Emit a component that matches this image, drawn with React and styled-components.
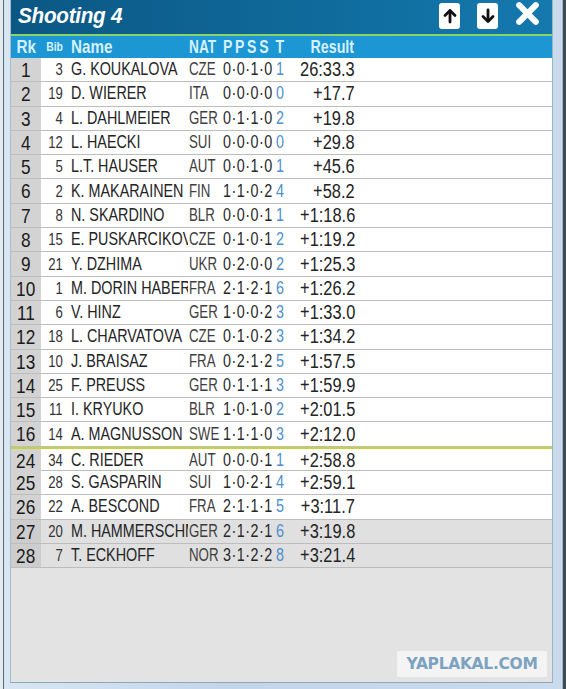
import styled, { createGlobalStyle } from "styled-components";

const GlobalStyle = createGlobalStyle`
  html, body {
    margin: 0;
    padding: 0;
    background: #c8dbec;
  }
  * { box-sizing: border-box; }
`;

// no narrow face installed: Liberation Sans squeezed to Arial Narrow proportions
const SANS = `"Liberation Sans", Arial, sans-serif`;

const results = [
  { rk: 1, bib: 3, name: "G. KOUKALOVA", nat: "CZE", shots: "0·0·1·0", t: 1, res: "26:33.3" },
  { rk: 2, bib: 19, name: "D. WIERER", nat: "ITA", shots: "0·0·0·0", t: 0, res: "+17.7" },
  { rk: 3, bib: 4, name: "L. DAHLMEIER", nat: "GER", shots: "0·1·1·0", t: 2, res: "+19.8" },
  { rk: 4, bib: 12, name: "L. HAECKI", nat: "SUI", shots: "0·0·0·0", t: 0, res: "+29.8" },
  { rk: 5, bib: 5, name: "L.T. HAUSER", nat: "AUT", shots: "0·0·1·0", t: 1, res: "+45.6" },
  { rk: 6, bib: 2, name: "K. MAKARAINEN", nat: "FIN", shots: "1·1·0·2", t: 4, res: "+58.2" },
  { rk: 7, bib: 8, name: "N. SKARDINO", nat: "BLR", shots: "0·0·0·1", t: 1, res: "+1:18.6" },
  { rk: 8, bib: 15, name: "E. PUSKARCIKOVA", nat: "CZE", shots: "0·1·0·1", t: 2, res: "+1:19.2" },
  { rk: 9, bib: 21, name: "Y. DZHIMA", nat: "UKR", shots: "0·2·0·0", t: 2, res: "+1:25.3" },
  { rk: 10, bib: 1, name: "M. DORIN HABERT", nat: "FRA", shots: "2·1·2·1", t: 6, res: "+1:26.2" },
  { rk: 11, bib: 6, name: "V. HINZ", nat: "GER", shots: "1·0·0·2", t: 3, res: "+1:33.0" },
  { rk: 12, bib: 18, name: "L. CHARVATOVA", nat: "CZE", shots: "0·1·0·2", t: 3, res: "+1:34.2" },
  { rk: 13, bib: 10, name: "J. BRAISAZ", nat: "FRA", shots: "0·2·1·2", t: 5, res: "+1:57.5" },
  { rk: 14, bib: 25, name: "F. PREUSS", nat: "GER", shots: "0·1·1·1", t: 3, res: "+1:59.9" },
  { rk: 15, bib: 11, name: "I. KRYUKO", nat: "BLR", shots: "1·0·1·0", t: 2, res: "+2:01.5" },
  { rk: 16, bib: 14, name: "A. MAGNUSSON", nat: "SWE", shots: "1·1·1·0", t: 3, res: "+2:12.0" },
  { rk: 24, bib: 34, name: "C. RIEDER", nat: "AUT", shots: "0·0·0·1", t: 1, res: "+2:58.8", split: true },
  { rk: 25, bib: 28, name: "S. GASPARIN", nat: "SUI", shots: "1·0·2·1", t: 4, res: "+2:59.1" },
  { rk: 26, bib: 22, name: "A. BESCOND", nat: "FRA", shots: "2·1·1·1", t: 5, res: "+3:11.7" },
  { rk: 27, bib: 20, name: "M. HAMMERSCHMIDT", nat: "GER", shots: "2·1·2·1", t: 6, res: "+3:19.8", dim: true },
  { rk: 28, bib: 7, name: "T. ECKHOFF", nat: "NOR", shots: "3·1·2·2", t: 8, res: "+3:21.4", dim: true },
];

const Frame = styled.div`
  width: 566px;
  height: 689px;
  padding: 0 13px 6px 10px;
  background: linear-gradient(to right, #d9e6f2, #c2d6ea 40%, #c9dbec);
  box-shadow: inset 3px 0 0 #e4ebf1, inset 4px 0 0 #56697a, inset -3px 0 0 #3f4a54,
    inset -4px 0 0 #9fb6cc;
  display: flex;
`;

const Panel = styled.div`
  flex: 1;
  display: flex;
  flex-direction: column;
  background: #e3e3e3;
  border-right: 1px solid #9db3c8;
  border-bottom: 1px solid #8fa5ba;
  border-left: 1px solid #a8bccf;
`;

const TitleBar = styled.div`
  height: 36px;
  display: flex;
  align-items: center;
  padding: 0 12px 2px 7px;
  background: linear-gradient(to right, #0b5783, #0f6a9b 55%, #1579ae);
  border-bottom: 2px solid #8ad36a;
`;

const Title = styled.h1`
  margin: 0;
  flex: 1;
  font-family: ${SANS};
  font-style: italic;
  font-weight: 900;
  font-size: 22.5px;
  color: #ffffff;
  letter-spacing: -0.3px;
`;

const Controls = styled.div`
  display: flex;
  align-items: center;
  gap: 17px;
`;

const NavButton = styled.button`
  width: 21px;
  height: 26px;
  padding: 0;
  border: none;
  border-radius: 3px;
  background: #ffffff;
  display: flex;
  align-items: center;
  justify-content: center;
`;

const CloseButton = styled.button`
  width: 25px;
  height: 25px;
  padding: 0;
  margin-top: -5px;
  border: none;
  background: none;
  display: flex;
  align-items: center;
  justify-content: center;
`;

const cols = "30px 23px 124px 35px 51px 11px 71px 1fr";

const Squeeze = styled.span`
  display: inline-block;
  transform: scaleX(${(p) => p.$k || 0.82});
  transform-origin: ${(p) => p.$origin || "left"} center;
`;

const HeaderRow = styled.div`
  height: 22px;
  display: grid;
  grid-template-columns: ${cols};
  align-items: end;
  background: #1c97d4;
  color: #d6f0ff;
  font-family: ${SANS};
  font-weight: 700;
  font-size: 19px;
  line-height: 22px;
  white-space: nowrap;
`;

const HeadCell = styled.div`
  text-align: ${(p) => p.$align || "left"};
  font-size: ${(p) => p.$size || "19px"};
  padding-left: ${(p) => p.$pl || "0"};
  padding-right: ${(p) => p.$pr || "0"};
  letter-spacing: ${(p) => p.$ls || "normal"};
`;

const Row = styled.div`
  height: 24.3px;
  display: grid;
  grid-template-columns: ${cols};
  align-items: center;
  background: ${(p) => (p.$dim ? "#e0e0e0" : "#ffffff")};
  border-bottom: 1px solid #bdbdbd;
  border-top: ${(p) => (p.$split ? "2px solid #c8d33c" : "none")};
  font-family: ${SANS};
  font-size: 17.5px;
  line-height: 23px;
  color: #262626;
  white-space: nowrap;
`;

const RankCell = styled.div`
  height: 100%;
  background: ${(p) => (p.$dim ? "#cdcdcd" : "#d3d3d3")};
  text-align: center;
  font-size: 21px;
  line-height: 23px;
  color: #1a1a1a;
`;

const BibCell = styled.div`
  text-align: right;
  font-size: 16px;
  padding-right: 1px;
  color: #333;
`;

const NameCell = styled.div`
  overflow: hidden;
  padding-left: 7px;
  color: #242424;
`;

const NatCell = styled.div`
  padding-left: 1px;
  color: #3e3e3e;
`;

const ShotCell = styled.div`
  color: #282828;
  letter-spacing: 0.6px;
`;

const MissCell = styled.div`
  text-align: center;
  color: #4e8fd0;
`;

const ResultCell = styled.div`
  text-align: right;
  font-size: 20px;
  padding-right: 1px;
  color: #242424;
`;

const Filler = styled.div`
  flex: 1;
  display: flex;
  align-items: flex-end;
  justify-content: flex-end;
  padding: 0 5px 5px 0;
`;

const Watermark = styled.div`
  width: 150px;
  height: 26px;
  background: #f4f4f4;
  color: #7da2bf;
  font-family: "DejaVu Sans", Verdana, sans-serif;
  font-weight: 700;
  font-size: 15.5px;
  line-height: 26px;
  text-align: center;
  letter-spacing: -0.3px;
`;

const ArrowIcon = ({ down }) => (
  <svg width="14" height="16" viewBox="0 0 14 16">
    <g
      transform={down ? "rotate(180 7 8)" : undefined}
      fill="none"
      stroke="#111"
      strokeWidth="2.8"
      strokeLinecap="round"
      strokeLinejoin="round"
    >
      <path d="M7 14V3" />
      <path d="M2 7.5L7 2.5L12 7.5" />
    </g>
  </svg>
);

const CloseIcon = () => (
  <svg width="25" height="25" viewBox="0 0 24 24">
    <g stroke="#fff" strokeWidth="5.8" strokeLinecap="round">
      <path d="M4 4L20 20" />
      <path d="M20 4L4 20" />
    </g>
  </svg>
);

export default function App() {
  return (
    <>
      <GlobalStyle />
      <Frame>
        <Panel>
          <TitleBar>
            <Title>
              <Squeeze $k={0.92}>Shooting 4</Squeeze>
            </Title>
            <Controls>
              <NavButton>
                <ArrowIcon />
              </NavButton>
              <NavButton>
                <ArrowIcon down />
              </NavButton>
              <CloseButton>
                <CloseIcon />
              </CloseButton>
            </Controls>
          </TitleBar>
          <HeaderRow>
            <HeadCell $align="center">
              <Squeeze $origin="center" $k={0.8}>Rk</Squeeze>
            </HeadCell>
            <HeadCell $align="right" $size="13px" $pr="1px">
              <Squeeze $origin="right" $k={0.8}>Bib</Squeeze>
            </HeadCell>
            <HeadCell $pl="7px">
              <Squeeze $k={0.8}>Name</Squeeze>
            </HeadCell>
            <HeadCell $pl="1px">
              <Squeeze $k={0.72}>NAT</Squeeze>
            </HeadCell>
            <HeadCell $ls="3.6px">
              <Squeeze $k={0.74}>PPSS</Squeeze>
            </HeadCell>
            <HeadCell $align="center">
              <Squeeze $origin="center" $k={0.74}>T</Squeeze>
            </HeadCell>
            <HeadCell $align="right" $pr="2px">
              <Squeeze $origin="right" $k={0.75}>Result</Squeeze>
            </HeadCell>
            <div />
          </HeaderRow>
          {results.map((r) => (
            <Row key={r.rk} $dim={r.dim} $split={r.split}>
              <RankCell $dim={r.dim}>
                <Squeeze $origin="center">{r.rk}</Squeeze>
              </RankCell>
              <BibCell>
                <Squeeze $origin="right">{r.bib}</Squeeze>
              </BibCell>
              <NameCell>
                <Squeeze>{r.name}</Squeeze>
              </NameCell>
              <NatCell>
                <Squeeze $k={0.76}>{r.nat}</Squeeze>
              </NatCell>
              <ShotCell>
                <Squeeze>{r.shots}</Squeeze>
              </ShotCell>
              <MissCell>
                <Squeeze $origin="center">{r.t}</Squeeze>
              </MissCell>
              <ResultCell>
                <Squeeze $origin="right">{r.res}</Squeeze>
              </ResultCell>
              <div />
            </Row>
          ))}
          <Filler>
            <Watermark>YAPLAKAL.COM</Watermark>
          </Filler>
        </Panel>
      </Frame>
    </>
  );
}
